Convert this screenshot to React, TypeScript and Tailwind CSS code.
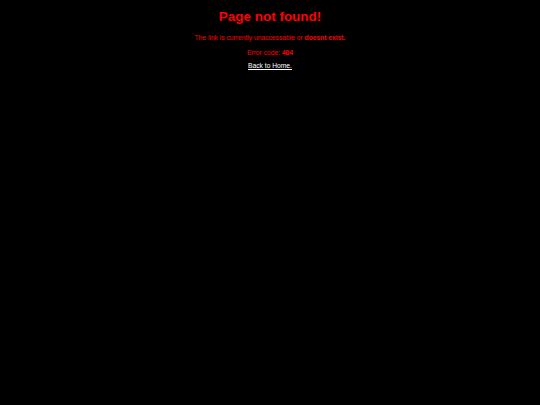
export default function App() {
  return (
    <div className="min-h-[405px] w-full bg-black text-center font-['Liberation_Sans',Arial,sans-serif]">
      <div className="flex flex-col items-center pt-[9px]">
        <h1 className="text-[13.5px] font-bold leading-[16px] text-[#ff0000]">Page not found!</h1>
        <p className="mt-[9px] text-[6.7px] leading-[8px] text-[#ff0000]">
          The link is currently unaccessable or <b>doesnt exist.</b>
        </p>
        <p className="mt-[6.5px] text-[6.7px] leading-[8px] text-[#ff0000]">
          Error code: <b>404</b>
        </p>
        <a href="#" className="mt-[5px] text-[6.7px] leading-[8px] text-white underline">
          Back to Home.
        </a>
      </div>
    </div>
  );
}
